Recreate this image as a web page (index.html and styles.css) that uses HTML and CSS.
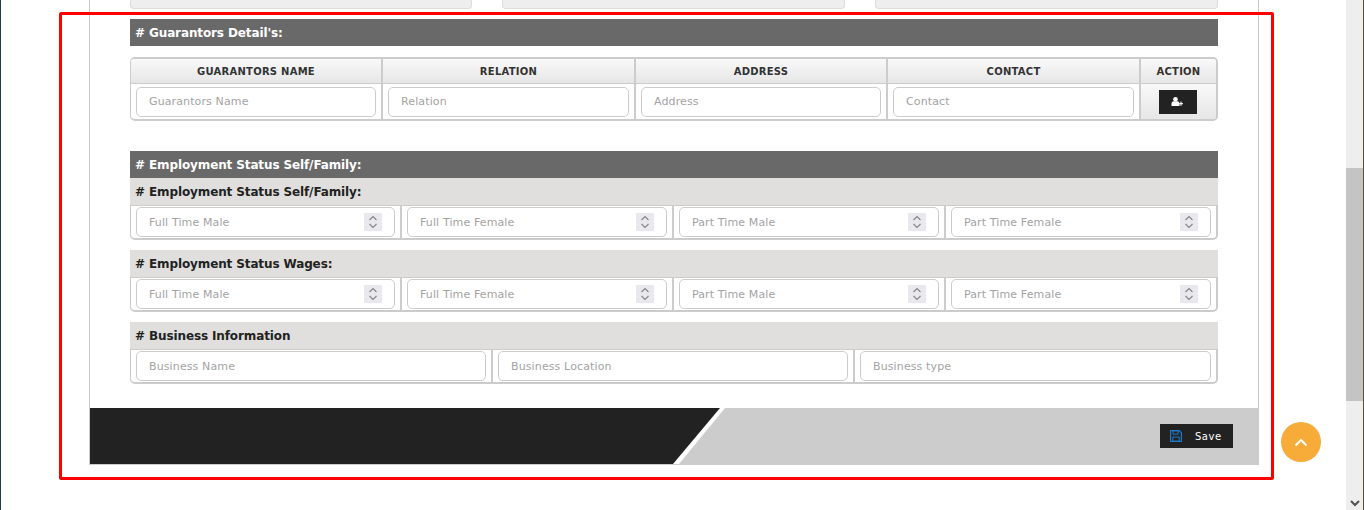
FILE: index.html
```html
<!DOCTYPE html>
<html lang="en">
<head>
  <meta charset="UTF-8">
  <meta name="viewport" content="width=device-width, initial-scale=1.0">
  <link rel="stylesheet" href="styles.css">
</head>
<body>

  <div class="page-strip"></div>

  <div class="content">
    <div class="panel">
      <div class="panel-body">

        <div class="top-fields">
          <div class="top-field"></div>
          <div class="top-field"></div>
          <div class="top-field"></div>
        </div>

        <h3 class="section-title"># Guarantors Detail's:</h3>

        <div class="guarantors">
          <div class="head-cell">Guarantors Name</div>
          <div class="head-cell">Relation</div>
          <div class="head-cell">Address</div>
          <div class="head-cell">Contact</div>
          <div class="head-cell">Action</div>
          <div class="field-cell"><input type="text" placeholder="Guarantors Name"></div>
          <div class="field-cell"><input type="text" placeholder="Relation"></div>
          <div class="field-cell"><input type="text" placeholder="Address"></div>
          <div class="field-cell"><input type="text" placeholder="Contact"></div>
          <div class="action-cell">
            <button class="add-btn" type="button" aria-label="Add guarantor">
              <svg width="12" height="9" viewBox="0 0 12 9"><circle cx="4.500" cy="2.300" r="2.300" fill="#fff"/><path d="M.5 9V6.800C.5 5.400 1.400 4.300 2.600 4.300h3.800C7.600 4.300 8.500 5.400 8.500 6.800V9z" fill="#fff"/><path d="M8 6h4v1.200H8zM9.400 4.500h1.200v4.200H9.400z" fill="#eee"/></svg>
            </button>
          </div>
        </div>

        <h3 class="section-title section-employment"># Employment Status Self/Family:</h3>
        <h4 class="sub-title"># Employment Status Self/Family:</h4>
        <div class="field-row four">
          <div class="field-cell"><input type="number" placeholder="Full Time Male"></div>
          <div class="field-cell"><input type="number" placeholder="Full Time Female"></div>
          <div class="field-cell"><input type="number" placeholder="Part Time Male"></div>
          <div class="field-cell"><input type="number" placeholder="Part Time Female"></div>
        </div>

        <h4 class="sub-title"># Employment Status Wages:</h4>
        <div class="field-row four">
          <div class="field-cell"><input type="number" placeholder="Full Time Male"></div>
          <div class="field-cell"><input type="number" placeholder="Full Time Female"></div>
          <div class="field-cell"><input type="number" placeholder="Part Time Male"></div>
          <div class="field-cell"><input type="number" placeholder="Part Time Female"></div>
        </div>

        <h4 class="sub-title"># Business Information</h4>
        <div class="field-row three">
          <div class="field-cell"><input type="text" placeholder="Business Name"></div>
          <div class="field-cell"><input type="text" placeholder="Business Location"></div>
          <div class="field-cell"><input type="text" placeholder="Business type"></div>
        </div>

      </div>

      <div class="panel-footer">
        <div class="slant-white"><div class="slant-dark"></div></div>
        <button class="save-btn" type="button">
          <svg width="12" height="12" viewBox="0 0 12 12"><path d="M.6.6h8.600l2.200 2.200v8.600H.6z" fill="none" stroke="#1f78c8" stroke-width="1.200"/><path d="M3 .8h5v3.400H3zM2.800 7h6.400v4.200H2.800z" fill="none" stroke="#1f78c8"/></svg>
          <span>Save</span>
        </button>
      </div>
    </div>
  </div>

  <div class="scrollbar">
    <div class="scroll-thumb"></div>
    <svg class="scroll-arrow" width="10" height="7" viewBox="0 0 10 7"><path d="M1 1l4 4 4-4" fill="none" stroke="#505050" stroke-width="2"/></svg>
  </div>

  <a class="to-top" href="#" aria-label="Back to top">
    <svg width="14" height="9" viewBox="0 0 14 9"><path d="M1.500 7.500L7 2l5.500 5.500" fill="none" stroke="#fff" stroke-width="2"/></svg>
  </a>

  <div class="red-box"></div>

</body>
</html>
```

FILE: styles.css
```css
* {
  box-sizing: border-box;
}

html, body {
  height: 510px;
  overflow: hidden;
}

body {
  margin: 0;
  display: flex;
  background-color: #fff;
  font-family: "DejaVu Sans", Verdana, sans-serif;
}

.page-strip {
  width: 1px;
  background-color: #1d3f4a;
}

.content {
  flex: 1;
  padding-left: 88px;
}

.panel {
  width: 1170px;
  height: 465px;
  border: 1px solid #ccc;
  border-top: none;
  display: flex;
  flex-direction: column;
}

.panel-body {
  flex: 1;
  padding: 0 40px;
}

.top-fields {
  display: grid;
  grid-template-columns: 342px 343px 343px;
  column-gap: 30px;
}

.top-field {
  height: 9px;
  background-color: #eee;
  border: 1px solid #ddd;
  border-top: none;
  border-radius: 0 0 4px 4px;
}

.section-title {
  margin: 10px 0 0;
  height: 27px;
  padding-left: 5px;
  background-color: #696969;
  color: #fff;
  font-size: 12px;
  line-height: 28px;
  letter-spacing: -.12px;
  font-weight: bold;
}

.section-employment {
  margin-top: 30px;
}

.sub-title {
  margin: 0;
  height: 27px;
  padding-left: 5px;
  background-color: #e0dfdd;
  color: #222;
  font-size: 12px;
  line-height: 28px;
  letter-spacing: -.12px;
  font-weight: bold;
}

.guarantors {
  margin-top: 11px;
  display: grid;
  grid-template-columns: 252px 253px 252px 253px 1fr;
  grid-template-rows: 25px 35px;
  border: 2px solid #ccc;
  border-left-width: 1px;
  border-radius: 5px;
  overflow: hidden;
}

.head-cell {
  display: flex;
  align-items: center;
  justify-content: center;
  background: linear-gradient(#f9f9f9, #e6e6e6);
  border-right: 2px solid #ccc;
  border-bottom: 1px solid #ccc;
  color: #333;
  font-size: 10px;
  font-weight: bold;
  letter-spacing: .25px;
  text-transform: uppercase;
}

.head-cell:nth-child(5) {
  border-right: none;
}

.field-cell {
  padding: 0 5px;
  border-right: 2px solid #ccc;
  display: flex;
  align-items: center;
}

.field-cell:last-child {
  border-right: none;
}

.action-cell {
  background: linear-gradient(#f9f9f9, #e6e6e6);
  display: flex;
  align-items: center;
  justify-content: center;
}

.add-btn {
  width: 38px;
  height: 24px;
  margin-right: 1px;
  border: none;
  padding: 0 3px 0 0;
  background-color: #222;
}

input {
  width: 100%;
  height: 30px;
  padding: 0 12px;
  background-color: #fff;
  border: 1px solid #ccc;
  border-radius: 5px;
  font-family: "DejaVu Sans", Verdana, sans-serif;
  font-size: 11px;
  letter-spacing: .12px;
  color: #555;
}

input::placeholder {
  color: #a3a3a3;
  opacity: 1;
}

input::-webkit-inner-spin-button {
  -webkit-appearance: none;
  opacity: 1;
  width: 18px;
  height: 18px;
  background: #e8e8ee url("data:image/svg+xml,%3Csvg xmlns='http://www.w3.org/2000/svg' width='18' height='18'%3E%3Cpath d='M5.500 7L9 3.500 12.500 7M5.500 11L9 14.500 12.500 11' fill='none' stroke='%23888' stroke-width='1.200'/%3E%3C/svg%3E") no-repeat center;
}

.field-row {
  display: grid;
  height: 35px;
  margin-bottom: 10px;
  border: 2px solid #ccc;
  border-top: 1px solid #ccc;
  border-left-width: 1px;
  border-radius: 0 0 5px 5px;
}

.field-row:last-child {
  margin-bottom: 0;
}

.four {
  grid-template-columns: 271px 272px 272px 1fr;
}

.three {
  grid-template-columns: 362px 362px 1fr;
}

.panel-footer {
  height: 56px;
  flex: none;
  background-color: #ccc;
  display: flex;
  justify-content: space-between;
  align-items: center;
  padding-right: 25px;
}

.slant-white {
  width: 635px;
  height: 100%;
  background-color: #fff;
  clip-path: polygon(0 0, 100% 0, 589px 100%, 0 100%);
}

.slant-dark {
  width: 630px;
  height: 100%;
  background-color: #222;
  clip-path: polygon(0 0, 100% 0, 583px 100%, 0 100%);
}

.save-btn {
  width: 73px;
  height: 24px;
  border: none;
  padding: 0 0 0 10px;
  background-color: #222;
  color: #fff;
  font-family: "DejaVu Sans", Verdana, sans-serif;
  font-size: 10px;
  letter-spacing: .5px;
  display: flex;
  align-items: center;
  gap: 13px;
}

.scrollbar {
  width: 18px;
  height: 510px;
  background-color: #eee;
  border-right: 1px solid #5a4d3a;
  display: flex;
  flex-direction: column;
  align-items: center;
}

.scroll-thumb {
  width: 100%;
  height: 233px;
  margin-top: 168px;
  background-color: #c4c4c4;
}

.scroll-arrow {
  margin-top: auto;
  margin-bottom: 3px;
}

.to-top {
  position: absolute;
  left: 1281px;
  top: 422px;
  width: 40px;
  height: 40px;
  border-radius: 50%;
  background-color: #f7ab38;
  display: flex;
  align-items: center;
  justify-content: center;
}

.red-box {
  position: absolute;
  left: 59px;
  top: 12px;
  width: 1215px;
  height: 468px;
  border: 3px solid #f00;
  border-radius: 2px;
  pointer-events: none;
}
```
